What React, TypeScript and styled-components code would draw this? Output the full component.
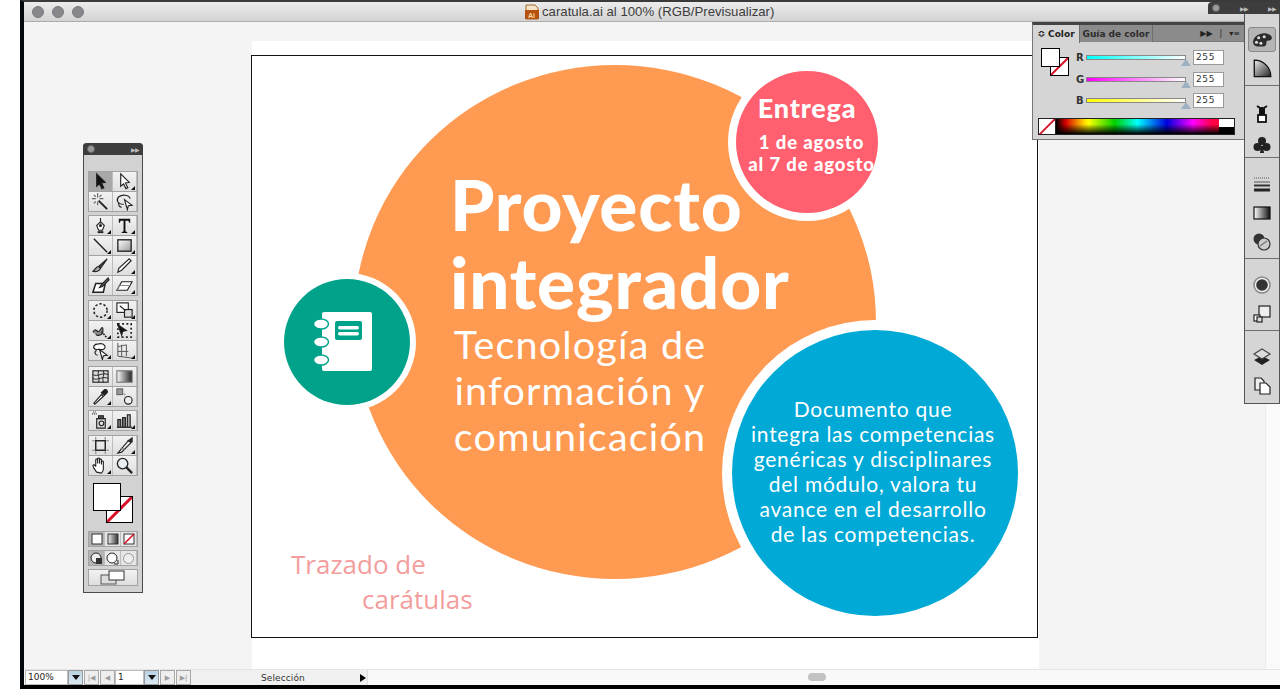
import React from "react";
import styled, { createGlobalStyle } from "styled-components";

const Global = createGlobalStyle`
  html, body { margin: 0; padding: 0; background: #fff; }
  body { width: 1280px; height: 689px; overflow: hidden; font-family: "Liberation Sans", Arial, sans-serif; }
  * { box-sizing: border-box; }
`;

const Page = styled.div`
  position: relative;
  width: 1280px;
  height: 689px;
  padding-left: 20px;
  background: #fff;
`;
const Window = styled.div`
  display: flex;
  flex-direction: column;
  width: 1260px;
  height: 689px;
  border-left: 4px solid #05090c;
  border-top: 2px solid #3a3a3a;
  border-bottom: 4px solid #000;
`;
const TitleBar = styled.div`
  flex: 0 0 20px;
  display: flex;
  align-items: center;
  position: relative;
  padding-left: 8px;
  gap: 8px;
  background: linear-gradient(#ececec, #d3d3d3);
  border-bottom: 1px solid #adadad;
`;
const Dot = styled.span`
  width: 12px;
  height: 12px;
  border-radius: 50%;
  background: #88888c;
  border: 1px solid #7a7a7e;
`;
const TitleText = styled.div`
  display: flex;
  align-items: center;
  gap: 2px;
  margin-left: 432px;
  font-size: 13.2px;
  color: #3c3c3c;
`;
const Workspace = styled.div`
  flex: 1;
  display: flex;
  min-height: 0;
`;
const Canvas = styled.div`
  flex: 1;
  background: #f4f4f4;
  padding: 19px 0 0 228px;
`;
const ScrollColumn = styled.div`
  flex: 0 0 15px;
  background: #fafafa;
  border-left: 1px solid #ececec;
`;
const Artboard = styled.div`
  width: 787px;
  height: 629px;
  background: #fff;
  padding-top: 14px;
`;
const Frame = styled.div`
  position: relative;
  width: 787px;
  height: 583px;
  margin-left: -1px;
  border: 1px solid #111;
  background: #fff;
`;
const Circle = styled.div<{ $x: number; $y: number; $r: number; $rx?: number; $bg: string; $ring?: number }>`
  position: absolute;
  left: ${(p) => p.$x - (p.$rx ?? p.$r) - 252}px;
  top: ${(p) => p.$y - p.$r - 56}px;
  width: ${(p) => (p.$rx ?? p.$r) * 2}px;
  height: ${(p) => p.$r * 2}px;
  border-radius: 50%;
  background: ${(p) => p.$bg};
  box-shadow: ${(p) => (p.$ring ? `0 0 0 ${p.$ring}px #fff` : "none")};
  display: flex;
  flex-direction: column;
  align-items: center;
  justify-content: center;
  color: #fff;
  font-family: Lato, sans-serif;
`;
const Headline = styled.div`
  position: absolute;
  left: 198px;
  top: 109px;
  font-family: Lato, sans-serif;
  font-weight: 900;
  color: #fff;
  font-size: 71px;
  line-height: 78px;
  letter-spacing: 0.8px;
`;
const Subhead = styled.div`
  position: absolute;
  left: 178px;
  top: 265px;
  width: 300px;
  text-align: center;
  font-family: Lato, sans-serif;
  font-weight: 400;
  color: #fff;
  font-size: 39.5px;
  line-height: 46px;
  letter-spacing: 1.2px;
`;
const DeliveryTitle = styled.div`
  font-weight: 900;
  font-size: 27px;
  line-height: 30px;
  margin-top: -16px;
  letter-spacing: 0.8px;
`;
const DeliveryDates = styled.div`
  margin-top: 8px;
  margin-left: 9px;
  font-weight: 900;
  font-size: 18.5px;
  line-height: 22px;
  letter-spacing: 0.9px;
  text-align: center;
  white-space: nowrap;
`;
const BlueText = styled.div`
  width: 270px;
  margin-left: -4px;
  margin-top: -4px;
  text-align: center;
  font-size: 21px;
  line-height: 25px;
  letter-spacing: 0.75px;
  font-weight: 400;
  white-space: nowrap;
`;
const Trace = styled.div<{ $x: number; $y: number }>`
  position: absolute;
  left: ${(p) => p.$x - 252}px;
  top: ${(p) => p.$y - 56}px;
  font-family: "Open Sans", sans-serif;
  font-size: 26px;
  line-height: 34px;
  color: #f49d9d;
  white-space: nowrap;
`;
const NotebookIcon = styled.svg`
  margin-right: 8px;
`;

const StatusBar = styled.div`
  flex: 0 0 14px;
  display: flex;
  align-items: stretch;
  background: #f9f9f9;
  border-top: 1px solid #e4e4e4;
  position: relative;
  padding-left: 1px;
`;
const Field = styled.div<{ $w: number }>`
  width: ${(p) => p.$w}px;
  background: #fff;
  font-size: 9px;
  line-height: 13px;
  padding-left: 2px;
  font-family: "DejaVu Sans", sans-serif;
  color: #222;
  border: 1px solid #bdbdbd;
`;
const DropButton = styled.div`
  width: 15px;
  display: flex;
  align-items: center;
  justify-content: center;
  background: linear-gradient(#b9d3e4, #dbe9f2);
  border: 1px solid #9a9a9a;
  &::after {
    content: "";
    border-left: 4px solid transparent;
    border-right: 4px solid transparent;
    border-top: 5px solid #111;
  }
`;
const NavButton = styled.div`
  width: 15px;
  margin-left: 1px;
  display: flex;
  align-items: center;
  justify-content: center;
  background: #eee;
  border: 1px solid #a8a8a8;
  color: #9c9c9c;
  font-size: 7px;
  font-family: "DejaVu Sans", sans-serif;
`;
const Selection = styled.div`
  width: 177px;
  display: flex;
  align-items: center;
  background: #f0f0f0;
  border-right: 1px solid #ddd;
  padding-left: 70px;
  font-family: "DejaVu Sans", sans-serif;
  font-size: 9px;
  letter-spacing: 0.1px;
  color: #333;
  &::after {
    content: "";
    margin-left: 55px;
    border-top: 4px solid transparent;
    border-bottom: 4px solid transparent;
    border-left: 6px solid #000;
  }
`;
const ScrollThumb = styled.div`
  position: absolute;
  left: 784px;
  top: 3px;
  width: 18px;
  height: 8px;
  border-radius: 4px;
  background: #c2c2c2;
`;

/* floating tools panel */
const ToolsPanel = styled.div`
  position: absolute;
  left: 83px;
  top: 143px;
  width: 60px;
  height: 450px;
  background: #d2d2d2;
  border: 1px solid #4a4a4a;
  border-top: 0;
  border-radius: 4px 4px 0 0;
  display: flex;
  flex-direction: column;
  align-items: center;
`;
const PanelHead = styled.div`
  width: 60px;
  flex: 0 0 12px;
  margin: 0 -1px;
  background: #3d3d3d;
  border-radius: 4px 4px 0 0;
  display: flex;
  align-items: center;
  justify-content: space-between;
  padding: 0 4px;
  color: #bbb;
  font-size: 6px;
  letter-spacing: -1px;
`;
const HeadDot = styled.span`
  width: 8px;
  height: 8px;
  border-radius: 50%;
  background: #9a9a9a;
  border: 1px solid #666;
`;
const Grip = styled.div<{ $w: number }>`
  flex: 0 0 5px;
  width: ${(p) => p.$w}px;
  height: 5px;
  background-image: radial-gradient(#9a9a9a 0.6px, transparent 0.7px);
  background-size: 2px 2px;
`;
const ToolsGrip = styled(Grip)`
  margin-top: 3px;
`;
const ToolGroup = styled.div<{ $top: number }>`
  margin-top: ${(p) => p.$top}px;
  width: 50px;
  display: grid;
  grid-template-columns: 24px 24px;
  border: 1px solid #a2a2a2;
  background: #a2a2a2;
  gap: 1px 0;
`;
const Tool = styled.div<{ $active?: boolean; $more?: boolean }>`
  position: relative;
  height: 19px;
  display: flex;
  align-items: center;
  justify-content: center;
  background: ${(p) => (p.$active ? "#a8a8a8" : "linear-gradient(#f2f2f2, #dedede)")};
  border-right: 1px solid #bcbcbc;
  &::after {
    content: "";
    display: ${(p) => (p.$more ? "block" : "none")};
    position: absolute;
    right: 1px;
    bottom: 1px;
    border-left: 4px solid transparent;
    border-bottom: 4px solid #111;
  }
`;
const ColorWell = styled.div`
  position: relative;
  flex: 0 0 55px;
  width: 50px;
`;
const FillSwatch = styled.div`
  position: absolute;
  left: 5px;
  top: 7px;
  width: 28px;
  height: 28px;
  background: #fff;
  border: 1px solid #000;
  z-index: 1;
`;
const StrokeSwatch = styled.div`
  position: absolute;
  left: 18px;
  top: 20px;
  width: 27px;
  height: 27px;
  background: #fff;
  border: 1px solid #000;
  overflow: hidden;
`;
const ModeRow = styled.div<{ $top: number }>`
  margin-top: ${(p) => p.$top}px;
  width: 50px;
  height: 16px;
  display: grid;
  grid-template-columns: repeat(3, 1fr);
  background: #a2a2a2;
  border: 1px solid #a2a2a2;
`;
const ModeCell = styled.div<{ $active?: boolean }>`
  display: flex;
  align-items: center;
  justify-content: center;
  background: ${(p) => (p.$active ? "#b4b4b4" : "#e6e6e6")};
  border-right: 1px solid #bcbcbc;
`;
const ScreenButton = styled.div`
  margin-top: 3px;
  width: 50px;
  height: 17px;
  display: flex;
  align-items: center;
  justify-content: center;
  background: linear-gradient(#f2f2f2, #dedede);
  border: 1px solid #a2a2a2;
`;

/* colour panel */
const ColorPanel = styled.div`
  position: absolute;
  left: 1032px;
  top: 22px;
  width: 213px;
  height: 118px;
  background: #d5d5d5;
  border: 1px solid #777;
  border-top: 3px solid #444;
`;
const TabRow = styled.div`
  height: 17px;
  display: flex;
  align-items: stretch;
  background: #8b8b8b;
  border-bottom: 1px solid #7a7a7a;
  font-size: 9px;
  font-family: "DejaVu Sans", sans-serif;
  font-weight: 700;
`;
const Tab = styled.div<{ $active?: boolean; $w: number }>`
  width: ${(p) => p.$w}px;
  display: flex;
  align-items: center;
  justify-content: center;
  white-space: nowrap;
  background: ${(p) => (p.$active ? "#d5d5d5" : "#8b8b8b")};
  color: ${(p) => (p.$active ? "#222" : "#2c2c2c")};
  border-right: 1px solid #6e6e6e;
  height: ${(p) => (p.$active ? 18 : 17)}px;
`;
const TabTools = styled.div`
  margin-left: auto;
  display: flex;
  align-items: center;
  gap: 7px;
  padding-right: 4px;
  color: #222;
  font-weight: 400;
  font-size: 8px;
`;
const ColorBody = styled.div`
  position: relative;
  padding: 5px 0 0 43px;
  height: 97px;
`;
const SmallFill = styled.div`
  position: absolute;
  left: 8px;
  top: 6px;
  width: 19px;
  height: 19px;
  background: #fff;
  border: 1px solid #000;
  z-index: 1;
`;
const SmallStroke = styled.div`
  position: absolute;
  left: 17px;
  top: 15px;
  width: 19px;
  height: 19px;
  background: #fff;
  border: 1px solid #000;
  overflow: hidden;
`;
const SliderRow = styled.div`
  display: flex;
  align-items: center;
  height: 21.5px;
  font-size: 10px;
  font-weight: 700;
  font-family: "DejaVu Sans", sans-serif;
  color: #333;
`;
const SliderLabel = styled.span`
  width: 10px;
`;
const Track = styled.div<{ $color: string }>`
  position: relative;
  width: 100px;
  height: 5px;
  border: 1px solid #888;
  background: linear-gradient(to right, ${(p) => p.$color}, #fff);
  &::after {
    content: "";
    position: absolute;
    right: -6px;
    top: 3px;
    border-left: 5px solid transparent;
    border-right: 5px solid transparent;
    border-bottom: 7px solid #9db0c2;
  }
`;
const ValueBox = styled.div`
  margin-left: 7px;
  width: 31px;
  height: 15px;
  background: #fff;
  border: 1px solid #999;
  font-size: 9px;
  line-height: 13px;
  padding-left: 2px;
  font-weight: 400;
  letter-spacing: 0.6px;
`;
const SpectrumBar = styled.div`
  position: absolute;
  left: 5px;
  bottom: 4px;
  width: 197px;
  height: 17px;
  display: flex;
  border: 1px solid #222;
`;
const NoneBox = styled.div`
  width: 17px;
  background: #fff;
  border-right: 1px solid #222;
  overflow: hidden;
`;
const Spectrum = styled.div`
  flex: 1;
  background:
    linear-gradient(to bottom, transparent 0, transparent 35%, #000 100%),
    linear-gradient(to right, #000, #d80000 6%, #ffd400 17%, #ffff00 20%, #00d000 36%, #00ffff 50%, #0000e0 68%, #ff00ff 84%, #ff0040 96%, #ff0040);
`;
const MonoBlock = styled.div`
  width: 15px;
  background: linear-gradient(#fff 50%, #000 50%);
`;

/* right dock */
const DockHead = styled.div`
  position: absolute;
  left: 1208px;
  top: 2px;
  width: 72px;
  height: 12px;
  background: #3d3d3d;
  border-radius: 4px 0 0 0;
  display: flex;
  align-items: center;
  padding: 0 4px;
  color: #bbb;
  font-size: 6px;
  letter-spacing: -1px;
`;
const DockArrows = styled.span`
  margin-left: auto;
`;
const Dock = styled.div`
  position: absolute;
  left: 1244px;
  top: 14px;
  width: 36px;
  height: 390px;
  background: #d5d5d5;
  border: 1px solid #555;
  border-top: 0;
  display: flex;
  flex-direction: column;
`;
const DockGroup = styled.div<{ $h: number; $gap?: number }>`
  flex: 0 0 ${(p) => p.$h}px;
  display: flex;
  flex-direction: column;
  align-items: center;
  border-bottom: 1px solid #707070;
  padding-top: 4px;
  gap: ${(p) => p.$gap ?? 4}px;
  &:last-child { border-bottom: 0; }
`;
const DockButton = styled.div<{ $active?: boolean }>`
  width: 28px;
  height: 25px;
  display: flex;
  align-items: center;
  justify-content: center;
  border-radius: 3px;
  background: ${(p) => (p.$active ? "#b5b5b5" : "transparent")};
  border: 1px solid ${(p) => (p.$active ? "#8a8a8a" : "transparent")};
`;

const Svg = ({ s = 19, children }: { s?: number; children: React.ReactNode }) => (
  <svg width={s} height={s} viewBox="0 0 20 20" fill="none" stroke="#222" strokeWidth="1.2">
    {children}
  </svg>
);

const tools: Record<string, React.ReactNode> = {
  arrow: <path d="M6 2l9 9-4 .5 2.5 5-2 1-2.5-5L6 15z" fill="#111" />,
  white: <path d="M6 2l9 9-4 .5 2.5 5-2 1-2.5-5L6 15z" fill="#fff" />,
  wand: <><path d="M8 9l9 9" strokeWidth="2" /><path d="M7 1v5M7 10v4M1 7h4M9 7h4M3 3l2 2M11 3L9 5M3 12l2-2" stroke="#666" /></>,
  lasso: <><path d="M9 13C2 13 1 8 4 5c4-3 11-2 12 2" /><path d="M4 11c-1 3 1 5 3 5" /><path d="M10 8l8 6-4 .5-1 4z" fill="#fff" /></>,
  pen: <><path d="M10 2v6M6 10l4-4 4 4-2 5H8z" fill="#fff" /><circle cx="10" cy="10" r="1" fill="#111" /><path d="M7 17h6" strokeWidth="2" /></>,
  type: <path d="M4 3h12v4h-1l-1-2h-3v11l2 1v1H7v-1l2-1V5H6L5 7H4z" fill="#111" stroke="none" />,
  line: <path d="M3 3l14 14" strokeWidth="1.5" />,
  rect: <><defs><linearGradient id="rg" x1="0" y1="0" x2="1" y2="1"><stop offset="0" stopColor="#fff" /><stop offset="1" stopColor="#999" /></linearGradient></defs><rect x="3" y="4" width="14" height="12" fill="url(#rg)" strokeWidth="1.4" /></>,
  brush: <><path d="M17 3L8 11l2 2z" fill="#555" /><path d="M8 11c-3 0-3 3-6 5 3 1 7 0 8-3z" fill="#aaa" /></>,
  pencil: <path d="M15 3l2 2L7 15l-4 2 1-4z" fill="#fff" />,
  blob: <><path d="M5 8h10l-2 9H2z" fill="#fff" strokeWidth="1.6" /><path d="M18 2l-7 7-2 3 3-1 7-7z" fill="#666" /></>,
  eraser: <><path d="M7 6h11l-5 9H2z" fill="#fff" /><path d="M2 15l3-5h11" stroke="#888" /></>,
  rotate: <circle cx="10" cy="10" r="7" strokeDasharray="2.5 2" strokeWidth="1.6" />,
  scale: <><rect x="2" y="2" width="12" height="10" fill="#fff" /><rect x="10" y="9" width="8" height="8" fill="#ddd" /><path d="M5 5l6 5" /></>,
  warp: <><path d="M2 12c3-7 5 3 8-3s3 2 2 4-5 3-7 1" fill="#888" /><path d="M11 11l6 7" strokeDasharray="2 1" strokeWidth="1.6" /></>,
  free: <><path d="M3 3h14v14H3z" strokeDasharray="2 2.5" strokeWidth="1.8" /><path d="M3 4l9 6-4 1-1 4z" fill="#111" /></>,
  shape: <><path d="M8 3c6-1 9 3 5 6H5C1 7 3 3 8 3z" fill="#fff" /><path d="M6 10c-3 1-2 5 1 5" /><path d="M9 9l8 6-4 .5-1 4z" fill="#fff" /></>,
  grid: <><path d="M3 2v14l15 2M3 6l9-2v12M7 4v13M3 11h11" stroke="#555" strokeWidth="1" /></>,
  mesh: <><rect x="2" y="4" width="16" height="12" fill="#ddd" /><path d="M2 8c5 3 10-3 16 0M2 12c5 3 10-3 16 0M8 4c-2 4 2 8 0 12M13 4c2 4-2 8 0 12" strokeWidth="1" /></>,
  gradient: <><defs><linearGradient id="gg"><stop offset="0" stopColor="#fff" /><stop offset="1" stopColor="#222" /></linearGradient></defs><rect x="2" y="4" width="16" height="12" fill="url(#gg)" stroke="#777" /></>,
  dropper: <><path d="M4 18l-1-1 8-9 2 2z" fill="#fff" /><path d="M11 6l3-3c2-1 4 1 3 3l-3 3z" fill="#222" /></>,
  blend: <><rect x="2" y="2" width="6" height="6" fill="#999" stroke="#666" /><path d="M9 7l2 1M10 10l1 1" stroke="#888" /><circle cx="14" cy="14" r="4" fill="#eee" /></>,
  sprayer: <><path d="M6 8h9v10H6z" fill="#ddd" /><circle cx="11" cy="13" r="2.5" /><rect x="8" y="5" width="5" height="3" fill="#555" /><path d="M1 3h6M2 1h3" strokeDasharray="1 1" /></>,
  graph: <><path d="M2 17h16" /><rect x="3" y="9" width="3" height="8" fill="#777" /><rect x="8" y="7" width="3" height="10" fill="#777" /><rect x="13" y="4" width="3" height="13" fill="#aaa" /></>,
  artboard: <><rect x="5" y="5" width="10" height="10" strokeWidth="1.5" /><path d="M5 1v3M15 1v3M5 16v3M15 16v3M1 5h3M1 15h3M16 5h3M16 15h3" stroke="#888" /></>,
  slice: <><path d="M3 18L14 5l3 2L7 17z" fill="#eee" /><path d="M14 5l4-3v4z" fill="#333" /><path d="M6 13l5 1" stroke="#777" /></>,
  hand: <path d="M6 17c-2-3-4-5-4-7 0-1 2-1 3 1V4c0-1 2-1 2 0v4-5c0-1 2-1 2 0v5-4c0-1 2-1 2 0v5-3c0-1 2-1 2 0v8c0 2-1 3-2 4z" fill="#fff" />,
  zoom: <><circle cx="8" cy="8" r="5.5" fill="#e8eef4" strokeWidth="1.4" /><path d="M12 12l6 6" strokeWidth="2.4" /></>,
};

type ToolDef = [string, boolean?, boolean?];
const toolGroups: { top: number; items: ToolDef[] }[] = [
  { top: 8, items: [["arrow", true, false], ["white", false, true], ["wand"], ["lasso"]] },
  { top: 3, items: [["pen", false, true], ["type", false, true], ["line", false, true], ["rect", false, true], ["brush"], ["pencil", false, true], ["blob"], ["eraser", false, true]] },
  { top: 4, items: [["rotate", false, true], ["scale", false, true], ["warp", false, true], ["free"], ["shape", false, true], ["grid", false, true]] },
  { top: 5, items: [["mesh"], ["gradient"], ["dropper", false, true], ["blend"]] },
  { top: 3, items: [["sprayer", false, true], ["graph", false, true]] },
  { top: 4, items: [["artboard"], ["slice", false, true], ["hand", false, true], ["zoom"]] },
];

const Slash = ({ w = 20 }: { w?: number }) => (
  <svg width={w} height={w} viewBox="0 0 20 20" style={{ display: "block" }}>
    <path d="M0 20L20 0" stroke="#d8102a" strokeWidth="2.4" />
  </svg>
);

const dock: Record<string, React.ReactNode> = {
  palette: <><path d="M2 13C1 7 8 3 14 4c5 1 6 4 4 6-2 1-4 0-4 2s0 4-4 4-7 0-8-3z" fill="#2c2c2c" stroke="none" /><circle cx="7" cy="8" r="1.4" fill="#ddd" stroke="none" /><circle cx="12" cy="7" r="1.4" fill="#ddd" stroke="none" /><circle cx="5" cy="12" r="1.4" fill="#ddd" stroke="none" /><circle cx="9" cy="13" r="1.4" fill="#ddd" stroke="none" /></>,
  guide: <><defs><linearGradient id="dg" x1="0" y1="0" x2="1" y2="1"><stop offset="0" stopColor="#eee" /><stop offset="1" stopColor="#222" /></linearGradient></defs><path d="M3 2v15h15C18 9 12 2 3 2z" fill="url(#dg)" stroke="#111" /></>,
  brushes: <><rect x="6" y="11" width="8" height="7" fill="#fff" strokeWidth="1.8" stroke="#111" /><path d="M8 11V4L5 2M12 11V4l3-2M10 11V3" strokeWidth="2" stroke="#111" /></>,
  club: <><circle cx="10" cy="6" r="4" fill="#222" stroke="none" /><circle cx="5.5" cy="12" r="4" fill="#222" stroke="none" /><circle cx="14.5" cy="12" r="4" fill="#222" stroke="none" /><path d="M9 11h2l1 7H8z" fill="#222" stroke="none" /></>,
  lines: <><path d="M2 4h16" strokeWidth="1" strokeDasharray="1 1" stroke="#555" /><path d="M2 8h16" strokeWidth="1" stroke="#555" /><path d="M2 11.5h16" strokeWidth="2" stroke="#333" /><path d="M2 16h16" strokeWidth="3" stroke="#222" /></>,
  grad: <><defs><linearGradient id="dg2"><stop offset="0" stopColor="#fff" /><stop offset="1" stopColor="#111" /></linearGradient></defs><rect x="2" y="4" width="16" height="12" fill="url(#dg2)" stroke="#111" /></>,
  trans: <><circle cx="7" cy="7" r="5.5" fill="#333" stroke="none" /><circle cx="12" cy="12" r="6" fill="#ccc" stroke="#333" /><path d="M8 14l7-5" stroke="#777" /></>,
  appearance: <><circle cx="10" cy="10" r="8" fill="#eee" stroke="#888" strokeWidth="1.5" /><circle cx="10" cy="10" r="5.8" fill="#333" stroke="none" /></>,
  styles: <><rect x="7" y="2" width="11" height="11" fill="#eee" stroke="#222" /><rect x="2" y="11" width="6" height="6" fill="#fff" stroke="#222" /><rect x="5" y="13" width="5" height="5" fill="#ddd" stroke="#222" /></>,
  layers: <><path d="M10 9l8 4-8 5-8-5z" fill="#222" stroke="none" /><path d="M10 2l8 5-8 5-8-5z" fill="#ddd" stroke="#444" /></>,
  boards: <><path d="M3 2h6l3 3v9H3z" fill="#eee" /><path d="M8 7h6l4 4v7H8z" fill="#fff" /></>,
};

export default function App() {
  return (
    <Page>
      <Global />
      <Window>
        <TitleBar>
          <Dot />
          <Dot />
          <Dot />
          <TitleText>
            <svg width="16" height="16" viewBox="0 0 16 16">
              <path d="M2 1h9l3 3v11H2z" fill="#f4e3c8" stroke="#a06a2a" />
              <rect x="1" y="6" width="14" height="9" fill="#b5520f" />
              <text x="4" y="13.5" fontSize="7" fontWeight="700" fill="#ffd9a0" fontFamily="Liberation Sans">Ai</text>
            </svg>
            caratula.ai al 100% (RGB/Previsualizar)
          </TitleText>
        </TitleBar>
        <Workspace>
          <Canvas>
            <Artboard>
              <Frame>
                <Circle $x={615} $y={321.5} $r={257} $rx={261} $bg="#ff9a52" />
                <Headline>
                  Proyecto
                  <br />
                  integrador
                </Headline>
                <Subhead>
                  Tecnología de
                  <br />
                  información y
                  <br />
                  comunicación
                </Subhead>
                <Circle $x={347} $y={342} $r={63} $bg="#00a38a" $ring={6}>
                  <NotebookIcon width="60" height="62" viewBox="0 0 60 62">
                    <rect x="9" y="1" width="50" height="59" rx="2" fill="#fff" />
                    <g fill="#fff" stroke="#00a38a" strokeWidth="1.5">
                      <ellipse cx="8" cy="13" rx="7.5" ry="5" />
                      <ellipse cx="8" cy="31" rx="7.5" ry="5" />
                      <ellipse cx="8" cy="49" rx="7.5" ry="5" />
                    </g>
                    <rect x="22" y="10" width="27" height="19" rx="2" fill="#00a38a" />
                    <rect x="25" y="15" width="21" height="3.5" rx="1.7" fill="#fff" />
                    <rect x="25" y="21" width="21" height="3.5" rx="1.7" fill="#fff" />
                  </NotebookIcon>
                </Circle>
                <Circle $x={807} $y={142} $r={71} $bg="#ff5f6e" $ring={8}>
                  <DeliveryTitle>Entrega</DeliveryTitle>
                  <DeliveryDates>
                    1 de agosto
                    <br />
                    al 7 de agosto
                  </DeliveryDates>
                </Circle>
                <Circle $x={875} $y={473} $r={143} $bg="#00a9d6" $ring={10}>
                  <BlueText>
                    Documento que
                    <br />
                    integra las competencias
                    <br />
                    genéricas y disciplinares
                    <br />
                    del módulo, valora tu
                    <br />
                    avance en el desarrollo
                    <br />
                    de las competencias.
                  </BlueText>
                </Circle>
                <Trace $x={291} $y={547}>Trazado de</Trace>
                <Trace $x={362} $y={582}>carátulas</Trace>
              </Frame>
            </Artboard>
          </Canvas>
          <ScrollColumn />
        </Workspace>
        <StatusBar>
          <Field $w={43}>100%</Field>
          <DropButton />
          <NavButton>|◀</NavButton>
          <NavButton>◀</NavButton>
          <Field $w={29}>1</Field>
          <DropButton />
          <NavButton>▶</NavButton>
          <NavButton>▶|</NavButton>
          <Selection>Selección</Selection>
          <ScrollThumb />
        </StatusBar>
      </Window>

      <ToolsPanel>
        <PanelHead>
          <HeadDot />
          ▶▶
        </PanelHead>
        <ToolsGrip $w={50} />
        {toolGroups.map((g, i) => (
          <ToolGroup key={i} $top={g.top}>
            {g.items.map(([name, active, more]) => (
              <Tool key={name} $active={active} $more={more}>
                <Svg>{tools[name]}</Svg>
              </Tool>
            ))}
          </ToolGroup>
        ))}
        <ColorWell>
          <FillSwatch />
          <StrokeSwatch>
            <Slash w={25} />
          </StrokeSwatch>
        </ColorWell>
        <ModeRow $top={0}>
          <ModeCell $active>
            <svg width="12" height="12"><rect x="1" y="1" width="10" height="10" fill="#fff" stroke="#333" /></svg>
          </ModeCell>
          <ModeCell>
            <svg width="12" height="12"><defs><linearGradient id="mg"><stop offset="0" stopColor="#eee" /><stop offset="1" stopColor="#333" /></linearGradient></defs><rect x="1" y="1" width="10" height="10" fill="url(#mg)" stroke="#333" /></svg>
          </ModeCell>
          <ModeCell>
            <svg width="12" height="12"><rect x="1" y="1" width="10" height="10" fill="#fff" stroke="#333" /><path d="M1 11L11 1" stroke="#d8102a" strokeWidth="1.6" /></svg>
          </ModeCell>
        </ModeRow>
        <ModeRow $top={3}>
          <ModeCell $active>
            <svg width="13" height="13"><circle cx="6" cy="6" r="5" fill="#eee" stroke="#222" /><rect x="6" y="6" width="6" height="6" fill="#333" /></svg>
          </ModeCell>
          <ModeCell>
            <svg width="13" height="13"><circle cx="6" cy="6" r="5" fill="#fff" stroke="#222" /><path d="M8 12h4V8" stroke="#222" fill="none" /></svg>
          </ModeCell>
          <ModeCell>
            <svg width="13" height="13"><circle cx="6.5" cy="6.5" r="5" fill="#eee" stroke="#999" /></svg>
          </ModeCell>
        </ModeRow>
        <ScreenButton>
          <svg width="26" height="15" viewBox="0 0 26 15">
            <rect x="1" y="5" width="15" height="9" fill="#ddd" stroke="#555" />
            <rect x="9" y="1" width="15" height="9" fill="#fff" stroke="#333" />
          </svg>
        </ScreenButton>
      </ToolsPanel>

      <DockHead>
        <HeadDot />
        <DockArrows>▶▶</DockArrows>
        <DockArrows>▶▶</DockArrows>
      </DockHead>
      <ColorPanel>
        <TabRow>
          <Tab $active $w={47}>≎ Color</Tab>
          <Tab $w={73}>Guía de color</Tab>
          <TabTools>
            <span>▶▶</span>
            <span>|</span>
            <span>▾≡</span>
          </TabTools>
        </TabRow>
        <ColorBody>
          <SmallFill />
          <SmallStroke>
            <Slash w={17} />
          </SmallStroke>
          <SliderRow>
            <SliderLabel>R</SliderLabel>
            <Track $color="#00ffff" />
            <ValueBox>255</ValueBox>
          </SliderRow>
          <SliderRow>
            <SliderLabel>G</SliderLabel>
            <Track $color="#ff00ff" />
            <ValueBox>255</ValueBox>
          </SliderRow>
          <SliderRow>
            <SliderLabel>B</SliderLabel>
            <Track $color="#ffff00" />
            <ValueBox>255</ValueBox>
          </SliderRow>
          <SpectrumBar>
            <NoneBox>
              <Slash w={16} />
            </NoneBox>
            <Spectrum />
            <MonoBlock />
          </SpectrumBar>
        </ColorBody>
      </ColorPanel>
      <Dock>
        <DockGroup $h={72}>
          <Grip $w={26} />
          <DockButton $active><Svg s={22}>{dock.palette}</Svg></DockButton>
          <DockButton><Svg s={22}>{dock.guide}</Svg></DockButton>
        </DockGroup>
        <DockGroup $h={71} $gap={6}>
          <Grip $w={26} />
          <DockButton><Svg s={20}>{dock.brushes}</Svg></DockButton>
          <DockButton><Svg s={20}>{dock.club}</Svg></DockButton>
        </DockGroup>
        <DockGroup $h={101}>
          <Grip $w={26} />
          <DockButton><Svg s={20}>{dock.lines}</Svg></DockButton>
          <DockButton><Svg s={20}>{dock.grad}</Svg></DockButton>
          <DockButton><Svg s={20}>{dock.trans}</Svg></DockButton>
        </DockGroup>
        <DockGroup $h={72}>
          <Grip $w={26} />
          <DockButton><Svg s={20}>{dock.appearance}</Svg></DockButton>
          <DockButton><Svg s={20}>{dock.styles}</Svg></DockButton>
        </DockGroup>
        <DockGroup $h={72}>
          <Grip $w={26} />
          <DockButton><Svg s={20}>{dock.layers}</Svg></DockButton>
          <DockButton><Svg s={20}>{dock.boards}</Svg></DockButton>
        </DockGroup>
      </Dock>
    </Page>
  );
}
